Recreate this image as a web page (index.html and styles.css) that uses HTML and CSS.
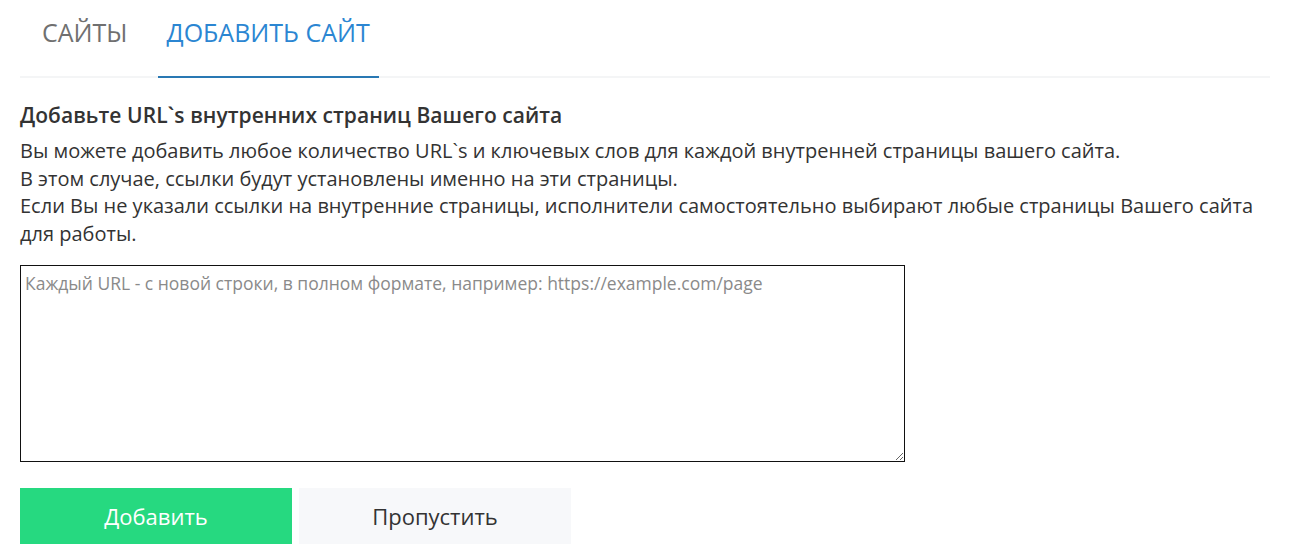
FILE: index.html
```
<!DOCTYPE html>
<html>
<head>
<title>Добавить сайт</title>
<meta http-equiv="content-type" content="text/html; charset=utf8">
<link rel="stylesheet" href="styles.css">
</head>
<body>
<div class="page">
    <div class="tabs">
        <a class="tab" href="#">САЙТЫ</a>
        <a class="tab active" href="#">ДОБАВИТЬ САЙТ</a>
    </div>

    <div class="section">
        <h2 class="title">Добавьте URL`s внутренних страниц Вашего сайта</h2>
        <p class="help">
            Вы можете добавить любое количество URL`s и ключевых слов для каждой внутренней страницы вашего сайта.<br>
            В этом случае, ссылки будут установлены именно на эти страницы.<br>
            Если Вы не указали ссылки на внутренние страницы, исполнители самостоятельно выбирают любые страницы Вашего сайта для работы.
        </p>
        <textarea class="urls" placeholder="Каждый URL - с новой строки, в полном формате, например: https://example.com/page"></textarea>
        <div class="buttons">
            <button class="btn btn-add">Добавить</button>
            <button class="btn btn-skip">Пропустить</button>
        </div>
    </div>
</div>
</body>
</html>
```

FILE: styles.css
```
body {
    margin: 0;
    font-family: "Open Sans", sans-serif;
    color: #333;
    background: #fff;
}
.page {
    padding: 0 21px 0 20px;
}
.tabs {
    display: flex;
    gap: 21px;
    padding-left: 13px;
    border-bottom: 2px solid #f4f5f6;
    height: 76px;
}
.tab {
    display: block;
    padding: 15px 9px 0;
    font-size: 25px;
    color: #707070;
    text-decoration: none;
    margin-bottom: -2px;
    border-bottom: 2px solid transparent;
}
.tab.active {
    color: #2b86d2;
    border-bottom-color: #2978b3;
}
.section {
    padding-top: 23px;
}
.title {
    margin: 0;
    font-size: 21px;
    font-weight: 600;
    line-height: 28px;
    letter-spacing: 0.05px;
}
.help {
    margin: 8px 0 0;
    font-size: 20px;
    line-height: 27.5px;
}
.urls {
    display: block;
    box-sizing: border-box;
    width: 885px;
    height: 197px;
    margin-top: 18px;
    padding: 5px 4px;
    border: 1px solid #111;
    font-family: "Open Sans", sans-serif;
    font-size: 17.5px;
    line-height: 24px;
    color: #333;
    resize: vertical;
}
.urls::placeholder {
    color: #8a8a8a;
}
.buttons {
    display: flex;
    gap: 7px;
    margin-top: 26px;
}
.btn {
    width: 272px;
    height: 56px;
    border: 0;
    font-family: "Open Sans", sans-serif;
    font-size: 22px;
    cursor: pointer;
}
.btn-add {
    background: #26d980;
    color: #fff;
}
.btn-skip {
    background: #f7f8fa;
    color: #333;
}
```
